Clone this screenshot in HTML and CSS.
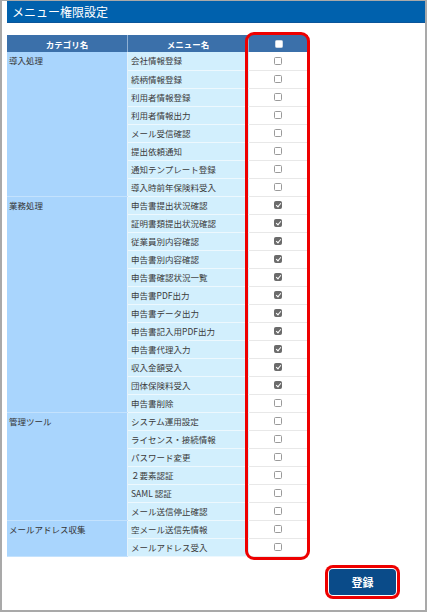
FILE: index.html
```html
<!DOCTYPE html>
<html lang="ja">
<head>
<meta charset="utf-8">
<link rel="stylesheet" href="styles.css">
</head>
<body>
<div class="frame">
  <h1 class="title">メニュー権限設定</h1>
  <div class="table-wrap">
    <table class="perm">
      <thead>
        <tr><th class="c-cat">カテゴリ名</th><th class="c-menu">メニュー名</th><th class="c-chk"><span class="cb head"></span></th></tr>
      </thead>
      <tbody>
        <tr><td class="cat" rowspan="8">導入処理</td><td class="menu">会社情報登録</td><td class="chk"><span class="cb"></span></td></tr>
        <tr><td class="menu">続柄情報登録</td><td class="chk"><span class="cb"></span></td></tr>
        <tr><td class="menu">利用者情報登録</td><td class="chk"><span class="cb"></span></td></tr>
        <tr><td class="menu">利用者情報出力</td><td class="chk"><span class="cb"></span></td></tr>
        <tr><td class="menu">メール受信確認</td><td class="chk"><span class="cb"></span></td></tr>
        <tr><td class="menu">提出依頼通知</td><td class="chk"><span class="cb"></span></td></tr>
        <tr><td class="menu">通知テンプレート登録</td><td class="chk"><span class="cb"></span></td></tr>
        <tr><td class="menu">導入時前年保険料受入</td><td class="chk"><span class="cb"></span></td></tr>

        <tr><td class="cat" rowspan="12">業務処理</td><td class="menu">申告書提出状況確認</td><td class="chk"><span class="cb on"></span></td></tr>
        <tr><td class="menu">証明書類提出状況確認</td><td class="chk"><span class="cb on"></span></td></tr>
        <tr><td class="menu">従業員別内容確認</td><td class="chk"><span class="cb on"></span></td></tr>
        <tr><td class="menu">申告書別内容確認</td><td class="chk"><span class="cb on"></span></td></tr>
        <tr><td class="menu">申告書確認状況一覧</td><td class="chk"><span class="cb on"></span></td></tr>
        <tr><td class="menu">申告書PDF出力</td><td class="chk"><span class="cb on"></span></td></tr>
        <tr><td class="menu">申告書データ出力</td><td class="chk"><span class="cb on"></span></td></tr>
        <tr><td class="menu">申告書記入用PDF出力</td><td class="chk"><span class="cb on"></span></td></tr>
        <tr><td class="menu">申告書代理入力</td><td class="chk"><span class="cb on"></span></td></tr>
        <tr><td class="menu">収入金額受入</td><td class="chk"><span class="cb on"></span></td></tr>
        <tr><td class="menu">団体保険料受入</td><td class="chk"><span class="cb on"></span></td></tr>
        <tr><td class="menu">申告書削除</td><td class="chk"><span class="cb"></span></td></tr>

        <tr><td class="cat" rowspan="6">管理ツール</td><td class="menu">システム運用設定</td><td class="chk"><span class="cb"></span></td></tr>
        <tr><td class="menu">ライセンス・接続情報</td><td class="chk"><span class="cb"></span></td></tr>
        <tr><td class="menu">パスワード変更</td><td class="chk"><span class="cb"></span></td></tr>
        <tr><td class="menu">２要素認証</td><td class="chk"><span class="cb"></span></td></tr>
        <tr><td class="menu">SAML 認証</td><td class="chk"><span class="cb"></span></td></tr>
        <tr><td class="menu">メール送信停止確認</td><td class="chk"><span class="cb"></span></td></tr>

        <tr><td class="cat" rowspan="2">メールアドレス収集</td><td class="menu">空メール送信先情報</td><td class="chk"><span class="cb"></span></td></tr>
        <tr><td class="menu">メールアドレス受入</td><td class="chk"><span class="cb"></span></td></tr>
      </tbody>
    </table>
    <div class="highlight"></div>
  </div>
  <div class="actions">
    <button class="btn" type="button">登録</button>
  </div>
</div>
</body>
</html>
```

FILE: styles.css
```css
html, body {
  margin: 0;
  padding: 0;
  background: #ffffff;
}

body {
  font-family: "Noto Sans CJK JP", "Noto Sans", sans-serif;
  color: #333333;
}

.frame {
  box-sizing: border-box;
  width: 427px;
  height: 612px;
  border: 2px solid #a9a9a9;
  border-top-width: 1px;
  display: flex;
  flex-direction: column;
}

.title {
  margin: 0 0 0 5px;
  height: 21px;
  background: #0061ad;
  border-bottom: 1px solid #0a559a;
  color: #ffffff;
  font-size: 12px;
  font-weight: normal;
  line-height: 21px;
  padding-left: 5px;
  letter-spacing: 0;
}

.table-wrap {
  position: relative;
  margin: 12px 0 0 5px;
  width: 299px;
}

.perm {
  border-collapse: collapse;
  table-layout: fixed;
  width: 299px;
  font-size: 8.5px;
}

.perm th {
  height: 17px;
  padding: 0;
  background: #3b70aa;
  color: #ffffff;
  font-weight: bold;
  font-size: 8.5px;
  text-align: center;
  border-left: 1px solid #8fb0d4;
  line-height: 16px;
}

.perm th:first-child {
  border-left: none;
}

.c-cat { width: 120px; }
.c-menu { width: 120px; }
.c-chk { width: 59px; }

.perm td {
  height: 18px;
  padding: 0;
  line-height: 17px;
  box-sizing: border-box;
}

.cat {
  background: #a9d5fd;
  vertical-align: top;
  padding: 0 0 0 2px !important;
  border-bottom: 1px solid #c4e2fd;
  border-right: 1px solid #e4f2fc;
  color: #333333;
}

.menu {
  background: #d2effd;
  padding-left: 3px !important;
  border-bottom: 1px solid #edf8fe;
  white-space: nowrap;
  color: #3a3a3a;
}

.chk {
  background: #ffffff;
  text-align: center;
  border-bottom: 1px solid #e8e8e8;
}

.cb {
  display: inline-block;
  position: relative;
  box-sizing: border-box;
  width: 8px;
  height: 8px;
  border: 1px solid #9a9a9a;
  border-radius: 1.5px;
  background: #ffffff;
  vertical-align: middle;
  margin-top: -2px;
}

.cb.head {
  border-color: #cfd9e4;
  background: #ffffff;
}

.cb.on {
  background: #6b6b6b;
  border-color: #6b6b6b;
}

.cb.on::after {
  content: "";
  position: absolute;
  left: 1.8px;
  top: 0.2px;
  width: 2px;
  height: 4px;
  border: solid #ffffff;
  border-width: 0 1.2px 1.2px 0;
  transform: rotate(40deg);
}

.highlight {
  position: absolute;
  left: 238px;
  top: -3px;
  width: 65px;
  height: 528px;
  box-sizing: border-box;
  border: 3px solid #ee0000;
  border-radius: 9px;
  pointer-events: none;
}

.actions {
  display: flex;
  justify-content: flex-end;
  padding: 12px 29px 0 0;
}

.btn {
  width: 67px;
  height: 26px;
  border: none;
  background: #0a4b89;
  color: #ffffff;
  font-family: "Noto Sans CJK JP", "Noto Sans", sans-serif;
  font-size: 11px;
  font-weight: bold;
  padding: 0;
  box-shadow: 0 0 0 1px #ffffff, 0 0 0 4px #ee0000;
  border-radius: 4px;
}
```
